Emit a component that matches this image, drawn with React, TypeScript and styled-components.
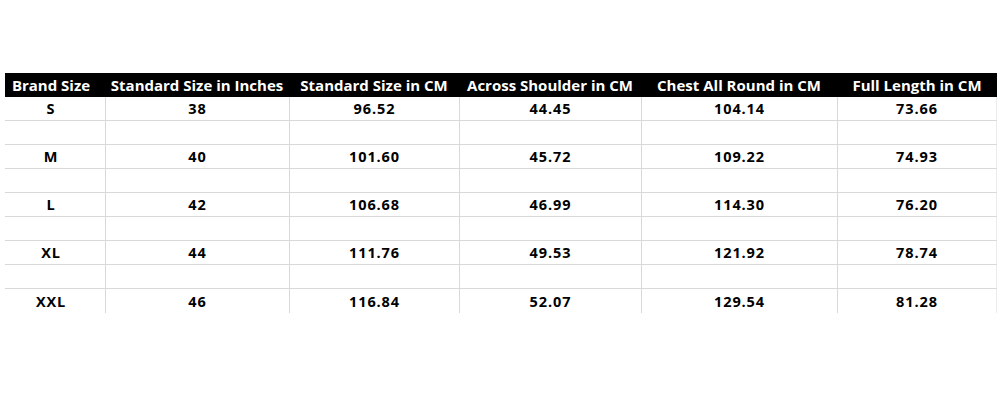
import React from "react";
import styled, { createGlobalStyle } from "styled-components";

const Global = createGlobalStyle`
  html, body { margin: 0; padding: 0; background: #fff; }
  body { font-family: "Open Sans", Lato, "Liberation Sans", sans-serif; }
`;

const COLS = "100px 184px 170px 182px 196px 160px";

const Page = styled.div`
  width: 1000px;
  height: 400px;
  padding: 73px 0 0 5px;
  box-sizing: border-box;
`;

const Table = styled.div`
  display: flex;
  flex-direction: column;
  width: 992px;
`;

const HeaderRow = styled.div`
  display: grid;
  grid-template-columns: ${COLS};
  height: 24px;
  background: #000;
`;

const HeadCell = styled.div<{ $first?: boolean }>`
  display: flex;
  align-items: center;
  justify-content: center;
  padding-right: ${(p) => (p.$first ? "8px" : "0")};
  color: #fff;
  font-weight: 700;
  font-size: 15px;
  white-space: nowrap;
`;

const Row = styled.div<{ $last?: boolean }>`
  display: grid;
  grid-template-columns: ${COLS};
  height: 24px;
  box-sizing: border-box;
  border-bottom: ${(p) => (p.$last ? "none" : "1px solid #d9d9d9")};
`;

const Cell = styled.div<{ $first?: boolean; $end?: boolean }>`
  display: flex;
  align-items: center;
  justify-content: center;
  padding-right: ${(p) => (p.$first ? "8px" : "0")};
  color: #000;
  font-weight: 700;
  font-size: 14.5px;
  letter-spacing: 0.9px;
  border-left: ${(p) => (p.$first ? "none" : "1px solid #d9d9d9")};
  border-right: ${(p) => (p.$end ? "1px solid #ececec" : "none")};
  box-sizing: border-box;
`;

const headers = [
  "Brand Size",
  "Standard Size in Inches",
  "Standard Size in CM",
  "Across Shoulder in CM",
  "Chest All Round in CM",
  "Full Length in CM",
];

const data = [
  ["S", "38", "96.52", "44.45", "104.14", "73.66"],
  ["M", "40", "101.60", "45.72", "109.22", "74.93"],
  ["L", "42", "106.68", "46.99", "114.30", "76.20"],
  ["XL", "44", "111.76", "49.53", "121.92", "78.74"],
  ["XXL", "46", "116.84", "52.07", "129.54", "81.28"],
];

const rows: string[][] = [];
data.forEach((r, i) => {
  rows.push(r);
  if (i < data.length - 1) rows.push(["", "", "", "", "", ""]);
});

export default function App() {
  return (
    <Page>
      <Global />
      <Table>
        <HeaderRow>
          {headers.map((h, j) => (
            <HeadCell key={h} $first={j === 0}>
              {h}
            </HeadCell>
          ))}
        </HeaderRow>
        {rows.map((r, i) => (
          <Row key={i} $last={i === rows.length - 1}>
            {r.map((c, j) => (
              <Cell key={j} $first={j === 0} $end={j === r.length - 1}>
                {c}
              </Cell>
            ))}
          </Row>
        ))}
      </Table>
    </Page>
  );
}
